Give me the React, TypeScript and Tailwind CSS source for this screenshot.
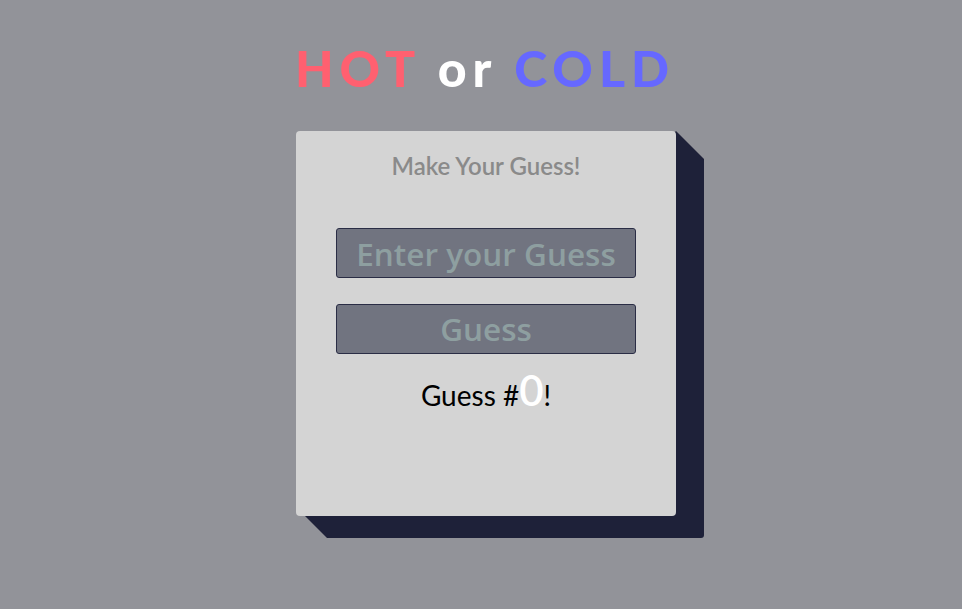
export default function App() {
  return (
    <div className="min-h-[609px] w-full bg-[#929399] flex flex-col items-center font-['Lato',sans-serif]">
      <h1 className="mt-[38px] text-[50px] leading-[60px] font-black tracking-[6px] ml-[8px]">
        <span className="text-[#ff6070]">HOT</span>
        <span className="text-white"> or </span>
        <span className="text-[#6668ff]">COLD</span>
      </h1>

      <div className="relative mt-[33px] ml-[10px] w-[380px] h-[385px]">
        <div className="absolute left-0 top-0 w-[408px] h-[407px] bg-[#1e2139] rounded-br-[3px] [clip-path:polygon(380px_0,408px_28px,408px_407px,31px_407px,9px_385px)]" />
        <div className="relative h-full bg-[#d4d4d4] rounded-[4px] flex flex-col items-center">
          <p className="mt-[20px] text-[24px] leading-[30px] font-semibold text-[#8a8a8a]">Make Your Guess!</p>
          <input
            placeholder="Enter your Guess"
            className="mt-[47px] w-[300px] h-[50px] bg-[#717480] border border-[#2a2d45] rounded-[3px] text-center text-[31.5px] font-semibold font-['Open_Sans',sans-serif] text-[#8e9fa0] placeholder:text-[#8e9fa0] outline-none"
          />
          <button className="mt-[26px] w-[300px] h-[50px] bg-[#717480] border border-[#2a2d45] rounded-[3px] text-center text-[31.5px] font-semibold font-['Open_Sans',sans-serif] text-[#8e9fa0]">
            Guess
          </button>
          <p className="mt-[11px] text-[28px] leading-[50px] text-black">
            Guess #<span className="text-[42px] font-semibold text-white">0</span>!
          </p>
        </div>
      </div>
    </div>
  );
}
